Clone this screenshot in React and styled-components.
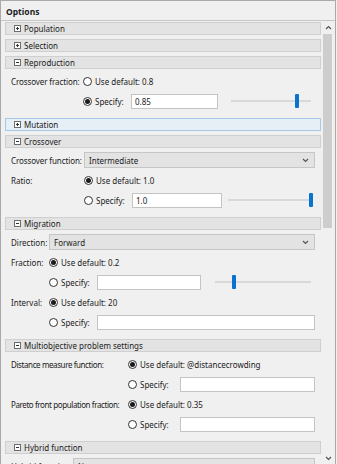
import React from "react";
import styled, { createGlobalStyle } from "styled-components";

const GlobalStyle = createGlobalStyle`
  html, body {
    margin: 0;
    padding: 0;
    background: #f0f0f0;
  }
  body {
    font-family: "Noto Sans", "Open Sans", sans-serif;
    font-size: 8px;
    color: #1b1b1b;
  }
`;

const Frame = styled.div`
  width: 336px;
  height: 464px;
  box-sizing: border-box;
  border: 1px solid #a9a9a9;
  border-bottom: none;
  display: flex;
  flex-direction: column;
  overflow: hidden;
  background: #f0f0f0;
`;

const Title = styled.div`
  height: 19px;
  box-sizing: border-box;
  padding: 2px 0 0 5px;
  display: flex;
  align-items: center;
  font-weight: bold;
  font-size: 8.5px;
`;

const Panel = styled.div`
  flex: 1;
  min-height: 0;
  display: flex;
  border-top: 1px solid #c6c6c6;
  padding-right: 1px;
`;

const Content = styled.div`
  flex: 1;
  min-width: 0;
  overflow: hidden;
  padding: 1px 1px 0 4px;
`;

const SectionBox = styled.div`
  margin-bottom: 4px;
`;

const Bar = styled.div`
  height: 13px;
  box-sizing: border-box;
  border: 1px solid ${(p) => (p.$active ? "#a8c9e6" : "#cfcfcf")};
  background: ${(p) => (p.$active ? "#e6eef6" : "#e3e3e3")};
  display: flex;
  align-items: center;
  gap: 3px;
  padding-left: 8px;
`;

const Body = styled.div`
  padding: 2px 6px 3px 6px;
`;

const RowGrid = styled.div`
  display: grid;
  grid-template-columns: ${(p) => p.$labelWidth}px 1fr;
  align-items: center;
  height: 20px;
`;

const Label = styled.span`
  white-space: nowrap;
  letter-spacing: ${(p) => p.$tracking || 0}px;
`;

const Cell = styled.div`
  display: flex;
  align-items: center;
  min-width: 0;
`;

const Circle = styled.span`
  width: 9px;
  height: 9px;
  box-sizing: border-box;
  border-radius: 50%;
  border: 1px solid #333;
  background: #fff;
  display: grid;
  place-items: center;
  flex-shrink: 0;

  &::after {
    content: "";
    width: 5px;
    height: 5px;
    border-radius: 50%;
    background: ${(p) => (p.$checked ? "#1b1b1b" : "transparent")};
  }
`;

const Option = styled.span`
  display: inline-flex;
  align-items: center;
  gap: 3px;
  white-space: nowrap;
  width: ${(p) => (p.$width ? `${p.$width}px` : "auto")};
  flex-shrink: 0;
`;

const TextBox = styled.input`
  flex: 1;
  min-width: 0;
  height: 15px;
  box-sizing: border-box;
  border: 1px solid #c4c4c4;
  background: #fff;
  padding: 0 3px;
  font: inherit;
  color: inherit;
  outline: none;
`;

const Select = styled.div`
  flex: 1;
  height: 16px;
  box-sizing: border-box;
  border: 1px solid #c6c6c6;
  background: #e3e3e3;
  display: flex;
  align-items: center;
  justify-content: space-between;
  padding: 0 5px 0 4px;
`;

const SliderTrack = styled.div`
  width: ${(p) => p.$width}px;
  height: 15px;
  margin: 0 ${(p) => p.$right}px 0 ${(p) => p.$left}px;
  display: flex;
  align-items: center;
  flex-shrink: 0;
  background: linear-gradient(#d9d9d9, #d9d9d9) center / 100% 2px no-repeat;
`;

const SliderThumb = styled.div`
  width: 4px;
  height: 14px;
  border-radius: 1px;
  background: #0a72cf;
`;

const ScrollBar = styled.div`
  width: 12px;
  display: flex;
  flex-direction: column;
  background: #f0f0f0;
`;

const ScrollArrow = styled.div`
  height: 12px;
  display: flex;
  align-items: center;
  justify-content: center;
  flex-shrink: 0;
`;

const ScrollThumb = styled.div`
  height: 194px;
  margin: 1px 2px 0 1px;
  background: #cdcdcd;
`;

const Spacer = styled.div`
  flex: 1;
`;

const ToggleIcon = ({ open }) => (
  <svg width="7" height="7" viewBox="0 0 7 7">
    <rect x="0.5" y="0.5" width="6" height="6" fill="#fff" stroke="#6d6d6d" />
    <line x1="2" y1="3.5" x2="5" y2="3.5" stroke="#333" />
    {!open && <line x1="3.5" y1="2" x2="3.5" y2="5" stroke="#333" />}
  </svg>
);

const Chevron = ({ up }) => (
  <svg width="7" height="5" viewBox="0 0 7 5">
    <polyline
      points={up ? "1,4 3.5,1.5 6,4" : "1,1 3.5,3.5 6,1"}
      fill="none"
      stroke="#555"
      strokeWidth="1.2"
    />
  </svg>
);

const Section = ({ title, open, active, children }) => (
  <SectionBox>
    <Bar $active={active}>
      <ToggleIcon open={open} />
      <span>{title}</span>
    </Bar>
    {open && children && <Body>{children}</Body>}
  </SectionBox>
);

const Row = ({ label, labelWidth, tracking, children }) => (
  <RowGrid $labelWidth={labelWidth}>
    <Label $tracking={tracking}>{label}</Label>
    <Cell>{children}</Cell>
  </RowGrid>
);

const Radio = ({ checked, children, width }) => (
  <Option $width={width}>
    <Circle $checked={checked} />
    <span>{children}</span>
  </Option>
);

const Dropdown = ({ value }) => (
  <Select>
    <span>{value}</span>
    <Chevron />
  </Select>
);

const Slider = ({ width, pct, left, right }) => (
  <SliderTrack $width={width} $left={left} $right={right}>
    <SliderThumb style={{ marginLeft: `${((width - 4) * pct) / 100}px` }} />
  </SliderTrack>
);

const Specify = ({ value = "", checked, width = 48, slider }) => (
  <>
    <Radio checked={checked} width={width}>
      Specify:
    </Radio>
    <TextBox readOnly value={value} />
    {slider && <Slider {...slider} />}
  </>
);

export default function App() {
  return (
    <>
      <GlobalStyle />
      <Frame>
        <Title>Options</Title>
        <Panel>
          <Content>
            <Section title="Population" />
            <Section title="Selection" />
            <Section title="Reproduction" open>
              <Row label="Crossover fraction:" labelWidth={72} tracking={-0.1}>
                <Radio>Use default: 0.8</Radio>
              </Row>
              <Row label="" labelWidth={72}>
                <Specify
                  checked
                  value="0.85"
                  slider={{ width: 80, pct: 84, left: 13, right: 4 }}
                />
              </Row>
            </Section>
            <Section title="Mutation" active />
            <Section title="Crossover" open>
              <Row label="Crossover function:" labelWidth={73} tracking={-0.1}>
                <Dropdown value="Intermediate" />
              </Row>
              <Row label="Ratio:" labelWidth={73}>
                <Radio checked>Use default: 1.0</Radio>
              </Row>
              <Row label="" labelWidth={73}>
                <Specify
                  value="1.0"
                  slider={{ width: 85, pct: 100, left: 6, right: 2 }}
                />
              </Row>
            </Section>
            <Section title="Migration" open>
              <Row label="Direction:" labelWidth={38}>
                <Dropdown value="Forward" />
              </Row>
              <Row label="Fraction:" labelWidth={38}>
                <Radio checked>Use default: 0.2</Radio>
              </Row>
              <Row label="" labelWidth={38}>
                <Specify slider={{ width: 96, pct: 19, left: 14, right: 4 }} />
              </Row>
              <Row label="Interval:" labelWidth={38}>
                <Radio checked>Use default: 20</Radio>
              </Row>
              <Row label="" labelWidth={38}>
                <Specify />
              </Row>
            </Section>
            <Section title="Multiobjective problem settings" open>
              <Row
                label="Distance measure function:"
                labelWidth={117}
                tracking={-0.4}
              >
                <Radio checked>Use default: @distancecrowding</Radio>
              </Row>
              <Row label="" labelWidth={117}>
                <Specify width={52} />
              </Row>
              <Row
                label="Pareto front population fraction:"
                labelWidth={117}
                tracking={-0.4}
              >
                <Radio checked>Use default: 0.35</Radio>
              </Row>
              <Row label="" labelWidth={117}>
                <Specify width={52} />
              </Row>
            </Section>
            <Section title="Hybrid function" open>
              <Row label="Hybrid function:" labelWidth={62}>
                <Dropdown value="None" />
              </Row>
            </Section>
          </Content>
          <ScrollBar>
            <ScrollArrow>
              <Chevron up />
            </ScrollArrow>
            <ScrollThumb />
            <Spacer />
            <ScrollArrow>
              <Chevron />
            </ScrollArrow>
          </ScrollBar>
        </Panel>
      </Frame>
    </>
  );
}
